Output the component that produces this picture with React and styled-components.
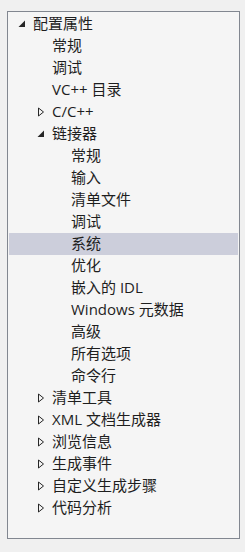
import React from "react";
import styled, { createGlobalStyle } from "styled-components";

const Global = createGlobalStyle`
  html, body { margin: 0; padding: 0; background: #f0f0f0; }
  body { font-family: "Segoe UI", "Open Sans", "Noto Sans CJK SC", sans-serif; }
`;

const Page = styled.div`
  padding: 11px 6px 13px 7px;
  width: 245px;
  height: 552px;
  box-sizing: border-box;
`;

const TreeBox = styled.div`
  width: 233px;
  height: 528px;
  box-sizing: border-box;
  border: 1px solid #828790;
  background: #f5f5f5;
  padding: 1px;
  display: flex;
  flex-direction: column;
`;

const Row = styled.div`
  height: 22px;
  display: flex;
  align-items: center;
  padding-left: ${(p) => 5 + p.$level * 19}px;
  background: ${(p) => (p.$selected ? "#cccedb" : "transparent")};
  font-size: 15px;
  color: #1e1e1e;
  white-space: nowrap;
  font-family: "Segoe UI", "Open Sans", "Noto Sans CJK SC", sans-serif;
`;

const Expander = styled.span`
  width: 19px;
  height: 22px;
  flex: none;
  display: flex;
  align-items: center;
  padding-left: 4px;
  box-sizing: border-box;
`;

const Label = styled.span`
  line-height: 22px;
  position: relative;
  top: -1px;
`;

const Expanded = () => (
  <svg width="8" height="8" viewBox="0 0 8 8">
    <polygon points="7,0.5 7,7 0.5,7" fill="#262626" />
  </svg>
);

const Collapsed = () => (
  <svg width="8" height="10" viewBox="0 0 8 10">
    <path d="M1.5 1 L6.5 5 L1.5 9 Z" fill="none" stroke="#262626" strokeWidth="1" strokeLinejoin="miter" />
  </svg>
);

const items = [
  { t: "配置属性", l: 0, e: "open" },
  { t: "常规", l: 1 },
  { t: "调试", l: 1 },
  { t: "VC++ 目录", l: 1 },
  { t: "C/C++", l: 1, e: "closed" },
  { t: "链接器", l: 1, e: "open" },
  { t: "常规", l: 2 },
  { t: "输入", l: 2 },
  { t: "清单文件", l: 2 },
  { t: "调试", l: 2 },
  { t: "系统", l: 2, s: true },
  { t: "优化", l: 2 },
  { t: "嵌入的 IDL", l: 2 },
  { t: "Windows 元数据", l: 2 },
  { t: "高级", l: 2 },
  { t: "所有选项", l: 2 },
  { t: "命令行", l: 2 },
  { t: "清单工具", l: 1, e: "closed" },
  { t: "XML 文档生成器", l: 1, e: "closed" },
  { t: "浏览信息", l: 1, e: "closed" },
  { t: "生成事件", l: 1, e: "closed" },
  { t: "自定义生成步骤", l: 1, e: "closed" },
  { t: "代码分析", l: 1, e: "closed" },
];

export default function App() {
  return (
    <>
      <Global />
      <Page>
        <TreeBox>
          {items.map((it, i) => (
            <Row key={i} $level={it.l} $selected={it.s}>
              <Expander>
                {it.e === "open" ? <Expanded /> : it.e === "closed" ? <Collapsed /> : null}
              </Expander>
              <Label>{it.t}</Label>
            </Row>
          ))}
        </TreeBox>
      </Page>
    </>
  );
}
